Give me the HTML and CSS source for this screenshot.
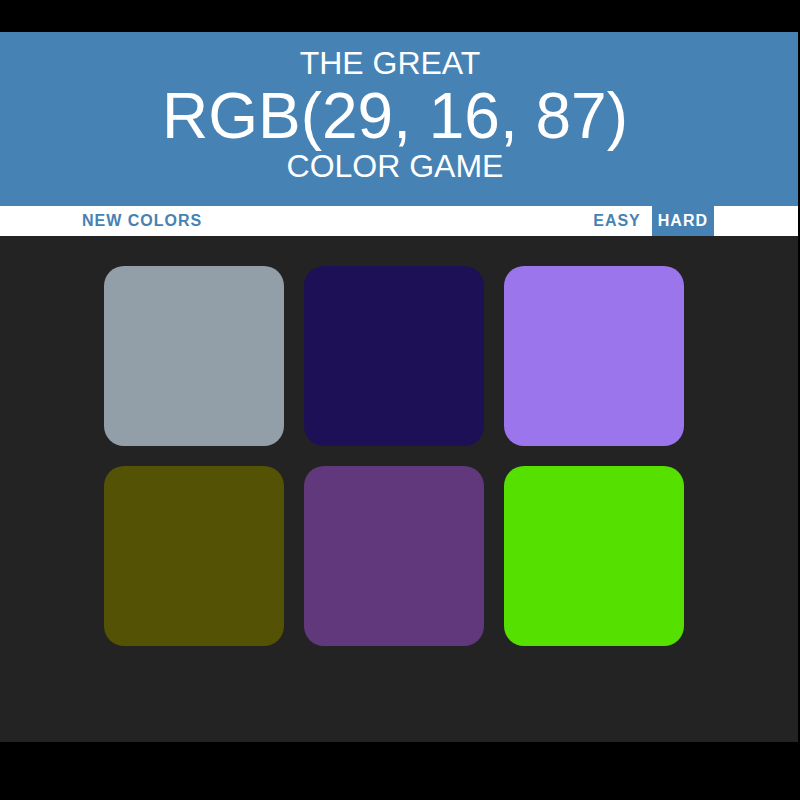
FILE: index.html
```html
<!DOCTYPE html>
<html>
<head>
<meta charset="utf-8">
<title>Color Game</title>
<link rel="stylesheet" href="styles.css">
</head>
<body>
<div class="frame">
  <h1 class="title">
    <span class="title-small title-first">The Great</span>
    <span class="title-big">RGB(29, 16, 87)</span>
    <span class="title-small title-last">Color Game</span>
  </h1>
  <div class="stripe">
    <button class="btn">New Colors</button>
    <div class="modes">
      <button class="btn">Easy</button>
      <button class="btn selected">Hard</button>
    </div>
  </div>
  <div class="board">
    <div class="grid">
      <div class="square sq1"></div>
      <div class="square sq2"></div>
      <div class="square sq3"></div>
      <div class="square sq4"></div>
      <div class="square sq5"></div>
      <div class="square sq6"></div>
    </div>
  </div>
</div>
</body>
</html>
```

FILE: styles.css
```css
html, body {
  margin: 0;
  padding: 0;
  background: #000;
}
body {
  font-family: "Liberation Sans", Arial, sans-serif;
}
.frame {
  width: 798px;
  margin-top: 32px;
}
.title {
  margin: 0;
  padding: 11px 8px 22px 0;
  background: #4682b4;
  color: #fff;
  font-weight: normal;
  text-align: center;
  text-transform: uppercase;
}
.title-small {
  display: block;
  font-size: 32px;
  line-height: 40px;
}
.title-first {
  padding-right: 10px;
}
.title-last {
  line-height: 35px;
}
.title-big {
  display: block;
  font-size: 64px;
  line-height: 66px;
}
.stripe {
  height: 30px;
  background: #fff;
  display: flex;
  justify-content: space-between;
  padding: 0 84px 0 76px;
}
.modes {
  display: flex;
  gap: 5px;
}
.btn {
  border: none;
  background: #fff;
  color: #4682b4;
  font-family: "Liberation Sans", Arial, sans-serif;
  font-size: 16px;
  font-weight: 700;
  letter-spacing: 1px;
  text-transform: uppercase;
  padding: 0 6px;
  height: 30px;
  margin: 0;
}
.btn.selected {
  background: #4682b4;
  color: #fff;
}
.board {
  background: #232323;
  height: 506px;
  padding-top: 30px;
  box-sizing: border-box;
}
.grid {
  display: grid;
  grid-template-columns: repeat(3, 180px);
  grid-auto-rows: 180px;
  gap: 20px;
  padding-left: 104px;
}
.square {
  border-radius: 20px;
}
.sq1 { background: #939fa8; }
.sq2 { background: #1d1057; }
.sq3 { background: #9b75eb; }
.sq4 { background: #545205; }
.sq5 { background: #62387d; }
.sq6 { background: #55e000; }
```
